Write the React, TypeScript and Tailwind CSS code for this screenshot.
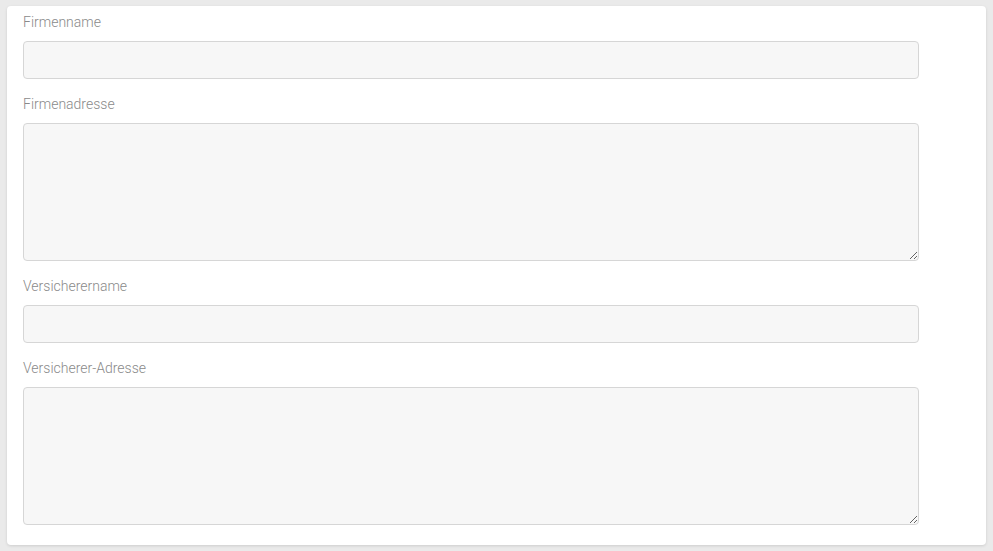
import React from "react";

const labelCls = "block text-[14px] font-light leading-[20px] text-[#8a8a8a] mb-[9px]";
const inputCls = "block w-[896px] h-[38px] bg-[#f7f7f7] border border-[#d6d6d6] rounded-[4px] outline-none";
const areaCls = "block w-[896px] h-[138px] bg-[#f7f7f7] border border-[#d6d6d6] rounded-[4px] outline-none";

export default function App() {
  return (
    <div className="w-[993px] h-[551px] bg-[#eaeaea] px-[7px] pt-[6px] pb-[6px]" style={{ fontFamily: "Roboto, 'Liberation Sans', sans-serif" }}>
      <div className="bg-white rounded-[4px] shadow-[0_1px_3px_rgba(0,0,0,0.12)] h-[539px] px-[16px] pt-[6px] pb-[20px]">
        <div className="mb-[15px]">
          <label className={labelCls}>Firmenname</label>
          <input className={inputCls} type="text" />
        </div>
        <div className="mb-[15px]">
          <label className={labelCls}>Firmenadresse</label>
          <textarea className={areaCls} />
        </div>
        <div className="mb-[15px]">
          <label className={labelCls}>Versicherername</label>
          <input className={inputCls} type="text" />
        </div>
        <div>
          <label className={labelCls}>Versicherer-Adresse</label>
          <textarea className={areaCls} />
        </div>
      </div>
    </div>
  );
}
